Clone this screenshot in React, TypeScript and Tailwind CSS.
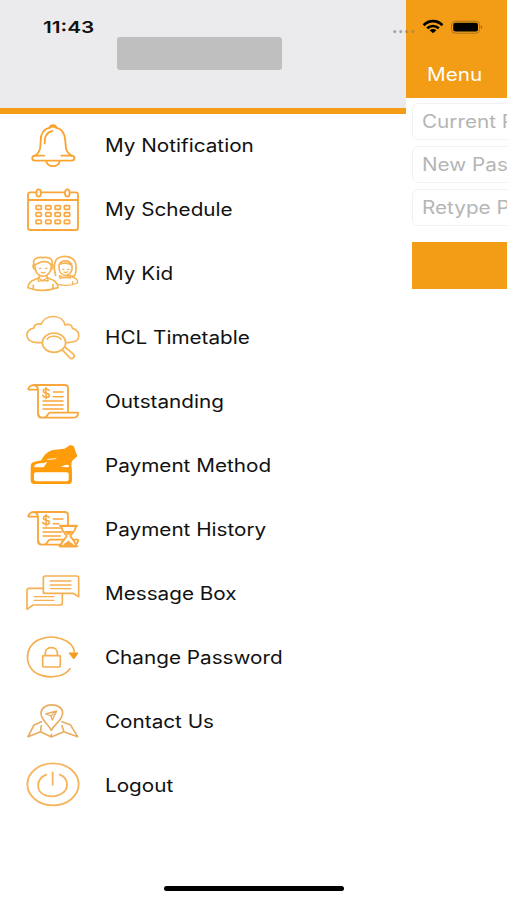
import { ReactNode } from "react";

type IconProps = { box: string; color?: string; width?: number; children: ReactNode };

function Icon({ box, color = "#f7a738", width = 5.5, children }: IconProps) {
  return (
    <svg
      viewBox={box}
      className="h-12 w-15 shrink-0"
      fill="none"
      stroke={color}
      strokeWidth={width}
      strokeLinecap="round"
      strokeLinejoin="round"
    >
      {children}
    </svg>
  );
}

function BellIcon() {
  return (
    <Icon box="24 18 180 144" color="#fba32c">
      <path d="M60 122C76 112 76 100 77 78C77 55 86 42 104 38C106 28 122 28 124 38C142 42 150 55 151 78C152 100 153 113 170 122" />
      <path d="M87 122H60C49 123 49 137 60 137H170C181 137 181 123 170 122H139M94 139C98 158 130 158 134 139" />
      <path d="M89 85C88 64 94 52 112 48M104 38C110 34 118 34 124 38" />
    </Icon>
  );
}

function CalendarIcon() {
  return (
    <Icon box="24 210 180 144" color="#faa63a">
      <path d="M64 232H46Q39 232 39 239V338Q39 345 46 345H182Q189 345 189 338V239Q189 232 182 232H164M79 232H149M39 255H189" />
      <ellipse cx="71" cy="234" rx="7" ry="11" />
      <ellipse cx="157" cy="234" rx="7" ry="11" />
      {[272, 293, 315].map((y) =>
        [63, 92, 120, 148].map((x) => (
          <rect key={`${x}-${y}`} x={x} y={y} width="16" height="11" rx="2.5" strokeWidth="5" />
        ))
      )}
    </Icon>
  );
}

function KidIcon() {
  return (
    <Icon box="24 12 180 144" color="#f6b455" width={5}>
      <path d="M60 66C48 43 63 35 84 38C107 34 118 45 108 66C109 79 99 93 84 94C69 92 61 81 60 66ZM61 59C71 54 77 49 88 50C101 49 105 55 108 61" />
      <path d="M57 58C51 61 54 72 61 73M111 58C117 61 115 72 108 73M73 92V98C60 104 40 106 39 128Q80 144 129 128C127 105 107 103 96 98V92M55 120V130M114 119V130" />
      <path d="M70 98L83 108L98 97L99 108L83 106L70 109ZM73 70H78M91 70H96M79 82Q84 85 90 82" strokeWidth="4" />
      <path d="M122 91C117 75 114 48 130 39C150 29 179 36 183 58C184 75 183 86 178 93H170M132 64C131 43 166 42 171 63C174 79 163 91 151 92C139 90 131 79 132 64ZM133 58Q154 49 171 61" />
      <path d="M165 93C179 98 190 102 188 114Q162 126 130 118M133 92L151 99L166 91V99L151 97L135 100ZM173 110V117M143 73H147M158 73H162M147 81Q152 85 158 80" strokeWidth="4" />
    </Icon>
  );
}

function CloudSearchIcon() {
  return (
    <Icon box="24 204 180 144" color="#f7b555" width={5}>
      <path d="M81 293H65C28 290 27 254 57 249C56 239 68 234 78 238C90 206 143 207 150 240C162 235 172 240 172 250C199 258 197 290 171 291C164 293 159 293 152 293" />
      <ellipse cx="117" cy="293" rx="35" ry="29" />
      <path d="M97 282C104 271 130 271 138 283M141 314L164 338C170 345 183 336 176 328L150 306" />
    </Icon>
  );
}

function Scroll() {
  return (
    <path d="M69 44H42Q39 44 40 41C45 29 54 30 64 30H151Q159 31 159 40V113H187Q191 113 189 118C185 129 180 128 171 128H79Q69 127 69 116V43Q67 31 54 30M70 117C72 128 79 128 87 128C99 127 96 112 107 113H159" />
  );
}

function Dollar() {
  return (
    <path d="M102 46C96 39 85 42 85 48C85 57 103 52 103 61C102 70 86 68 83 61M93 38V71" strokeWidth="4.5" />
  );
}

function InvoiceIcon() {
  return (
    <Icon box="24 6 180 144" color="#f9a63a">
      <Scroll />
      <Dollar />
      <path d="M115 51H144M115 65H144M84 78H144M84 90H144M84 102H144" strokeWidth="4.5" />
    </Icon>
  );
}

function HandCardIcon() {
  return (
    <Icon box="24 198 180 144" color="#ff9c0a">
      <path
        d="M47 278Q46 262 58 260L79 256C90 234 101 229 113 225L148 221L166 210L176 213L187 244L171 258C167 270 171 279 171 292V317Q170 327 160 327H58Q47 327 47 316Z"
        fill="#ff9c0a"
        stroke="none"
      />
      <rect x="57" y="292" width="104" height="27" rx="6" fill="white" stroke="none" />
      <path d="M58 277V273C60 266 71 264 82 265L97 261L86 277ZM137 276C149 271 159 266 162 273L161 277Z" fill="white" stroke="none" />
      <path d="M98 253C108 251 116 254 123 250" stroke="white" strokeWidth="3" />
    </Icon>
  );
}

function HistoryIcon() {
  return (
    <Icon box="24 15 180 144" color="#f9a63a">
      <g transform="translate(0 6)">
        <Scroll />
        <Dollar />
        <path d="M115 51H144M115 65H132M84 78H136M84 90H141M84 102H136" strokeWidth="4.5" />
      </g>
      <path d="M139 78H183C181 98 166 102 166 108C167 115 182 121 183 139H137C138 121 154 116 155 108C154 101 140 97 139 78Z" fill="white" />
      <path d="M135 77H186M133 139H187" strokeWidth="6" />
      <path d="M147 93H175L160 106ZM145 136C147 129 155 129 160 121C165 129 174 129 176 136Z" fill="#f9a63a" stroke="none" />
    </Icon>
  );
}

function ChatIcon() {
  return (
    <Icon box="24 207 180 144" color="#f6b052" width={5}>
      <path d="M85 280V234Q85 228 91 228H185Q191 228 191 234V290L174 280H91Q85 280 85 274" />
      <path d="M82 265H42Q36 265 36 271V328L54 315H136Q142 315 142 309V284" />
      <path d="M106 243H168M106 255H168M106 266H168M58 290H117M58 301H117" strokeWidth="4" />
    </Icon>
  );
}

function LockIcon() {
  return (
    <Icon box="24 15 180 144" color="#f5ae4e" width={5}>
      <path d="M165 122C148 145 113 151 82 143C25 128 24 57 71 35C117 15 175 37 178 72" />
      <path d="M163 75H189L177 92Z" fill="#f39b20" stroke="#f39b20" strokeWidth="3" />
      <rect x="83" y="83" width="53" height="34" rx="3" />
      <path d="M91 82V74C92 54 126 54 127 74V82" />
    </Icon>
  );
}

function MapIcon() {
  return (
    <Icon box="24 207 180 144" color="#e9ae62" width={5}>
      <path d="M109 307C99 286 77 276 78 255C79 223 141 222 143 254C143 277 120 285 109 307Z" />
      <path d="M92 258L125 249L112 276L108 264ZM108 264L116 257" strokeWidth="4" />
      <path d="M79 281L57 291L39 326L77 311L109 327L146 311L188 326L166 290L141 281M79 293L77 309M141 293L146 309M109 319V325" />
    </Icon>
  );
}

function PowerIcon() {
  return (
    <Icon box="24 33 180 144" color="#f6b45c">
      <ellipse cx="114" cy="103" rx="77" ry="63" />
      <path d="M94 74C61 87 62 126 92 136C124 147 157 127 156 104C156 90 147 79 134 74M113 67V104" />
    </Icon>
  );
}

const menuItems = [
  { label: "My Notification", icon: <BellIcon /> },
  { label: "My Schedule", icon: <CalendarIcon /> },
  { label: "My Kid", icon: <KidIcon /> },
  { label: "HCL Timetable", icon: <CloudSearchIcon /> },
  { label: "Outstanding", icon: <InvoiceIcon /> },
  { label: "Payment Method", icon: <HandCardIcon /> },
  { label: "Payment History", icon: <HistoryIcon /> },
  { label: "Message Box", icon: <ChatIcon /> },
  { label: "Change Password", icon: <LockIcon /> },
  { label: "Contact Us", icon: <MapIcon /> },
  { label: "Logout", icon: <PowerIcon /> },
];

const fields = ["Current Password", "New Password", "Retype Password"];

function StatusIcons() {
  return (
    <svg viewBox="0 0 94 20" className="absolute top-[17px] left-[391px] h-5 w-[94px]">
      <g fill="#a9a5a0">
        <circle cx="3.8" cy="14.6" r="1.6" />
        <circle cx="9.8" cy="14.6" r="1.6" />
        <circle cx="15.8" cy="14.6" r="1.6" fill="#bd8b40" />
        <circle cx="21.8" cy="14.6" r="1.6" fill="#bd8b40" />
      </g>
      <g fill="none" stroke="black" strokeWidth="2.7">
        <path d="M32.6 8.2C38 2.8 46 2.8 51.4 8.2" />
        <path d="M36.2 11.3C39.6 8.2 44.4 8.2 47.8 11.3" />
      </g>
      <path d="M38.6 13.2Q42 10.9 45.4 13.2L42 16.2Z" />
      <rect x="60.5" y="4.2" width="28.2" height="12" rx="3.8" fill="none" stroke="#a87420" />
      <rect x="62.2" y="5.8" width="24.8" height="8.8" rx="2.3" />
      <path d="M90.2 8.3Q92.3 10.2 90.2 12.1Z" fill="#8d6018" />
    </svg>
  );
}

export default function App() {
  return (
    <div className="relative flex h-[900px] w-[507px] overflow-hidden bg-white font-['Inter',sans-serif]">
      <aside className="flex w-[406px] shrink-0 flex-col">
        <header className="flex h-[114px] shrink-0 items-start border-b-[6px] border-[#f39c16] bg-[#ebebed]">
          <div className="w-[117px] shrink-0 pt-[17px] pl-[43px]">
            <span className="block w-max origin-left scale-x-[1.26] text-[16.5px] leading-5 font-semibold text-[#111]">
              11:43
            </span>
          </div>
          <div className="mt-[37px] h-[33px] w-[165px] rounded-[3px] bg-[#bfbfbf]" />
        </header>
        <nav className="-mt-px flex flex-col">
          {menuItems.map((item) => (
            <a key={item.label} className="flex h-16 items-center pl-[23px]">
              {item.icon}
              <span className="ml-[22px] origin-left scale-x-[1.15] pt-0.5 text-[18px] leading-6 whitespace-nowrap text-[#111]">
                {item.label}
              </span>
            </a>
          ))}
        </nav>
      </aside>

      <main className="w-[101px] shrink-0 overflow-hidden">
        <div className="flex h-[98px] items-end bg-[#f39c16] pb-[11px] pl-[21px]">
          <span className="origin-left scale-x-[1.15] text-[18px] leading-6 text-white">Menu</span>
        </div>
        <div className="flex w-[420px] flex-col gap-[6px] pt-[5px] pl-[6px]">
          {fields.map((field) => (
            <div
              key={field}
              className="flex h-[37px] items-center rounded-md border border-[#f1f1f1] pl-[9px]"
            >
              <span className="origin-left scale-x-[1.15] text-[18px] leading-6 whitespace-nowrap text-[#b5b5b5]">
                {field}
              </span>
            </div>
          ))}
          <div className="mt-[10px] h-[47px] bg-[#f39c16]" />
        </div>
      </main>

      <StatusIcons />
      <div className="absolute top-[886px] left-[164px] h-[5px] w-[180px] rounded-full bg-black" />
    </div>
  );
}
